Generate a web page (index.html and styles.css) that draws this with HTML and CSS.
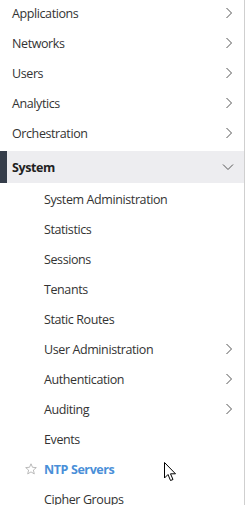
FILE: index.html
```html
<!DOCTYPE html>
<html>
<head>
<meta charset="utf-8">
<link rel="stylesheet" href="styles.css">
</head>
<body>
<nav class="nav">
  <div class="row top"><span class="label">Applications</span><svg class="chev" viewBox="0 0 8 12"><path d="M1.5 1 L6.5 6 L1.5 11"/></svg></div>
  <div class="row top"><span class="label">Networks</span><svg class="chev" viewBox="0 0 8 12"><path d="M1.5 1 L6.5 6 L1.5 11"/></svg></div>
  <div class="row top"><span class="label">Users</span><svg class="chev" viewBox="0 0 8 12"><path d="M1.5 1 L6.5 6 L1.5 11"/></svg></div>
  <div class="row top"><span class="label">Analytics</span><svg class="chev" viewBox="0 0 8 12"><path d="M1.5 1 L6.5 6 L1.5 11"/></svg></div>
  <div class="row top"><span class="label">Orchestration</span><svg class="chev" viewBox="0 0 8 12"><path d="M1.5 1 L6.5 6 L1.5 11"/></svg></div>
  <div class="row top active"><span class="label">System</span><svg class="chev down" viewBox="0 0 12 8"><path d="M1 1.5 L6 6.5 L11 1.5"/></svg></div>
  <div class="row sub"><span class="label">System Administration</span></div>
  <div class="row sub"><span class="label">Statistics</span></div>
  <div class="row sub"><span class="label">Sessions</span></div>
  <div class="row sub"><span class="label">Tenants</span></div>
  <div class="row sub"><span class="label">Static Routes</span></div>
  <div class="row sub"><span class="label">User Administration</span><svg class="chev" viewBox="0 0 8 12"><path d="M1.5 1 L6.5 6 L1.5 11"/></svg></div>
  <div class="row sub"><span class="label">Authentication</span><svg class="chev" viewBox="0 0 8 12"><path d="M1.5 1 L6.5 6 L1.5 11"/></svg></div>
  <div class="row sub"><span class="label">Auditing</span><svg class="chev" viewBox="0 0 8 12"><path d="M1.5 1 L6.5 6 L1.5 11"/></svg></div>
  <div class="row sub"><span class="label">Events</span></div>
  <div class="row sub current">
    <svg class="star" viewBox="0 0 12 12"><path d="M6 0.8 L7.5 4.3 L11.3 4.6 L8.4 7.1 L9.3 10.9 L6 8.9 L2.7 10.9 L3.6 7.1 L0.7 4.6 L4.5 4.3 Z"/></svg>
    <span class="label">NTP Servers</span>
    <svg class="cursor" viewBox="0 0 13 20"><path d="M0.5 0.5 L0.5 16 L4 12.5 L6.5 18.5 L9 17.5 L6.5 11.8 L11.5 11.8 Z"/></svg>
  </div>
  <div class="row sub"><span class="label">Cipher Groups</span></div>
</nav>
</body>
</html>
```

FILE: styles.css
```css
html, body {
  margin: 0;
  padding: 0;
  background: #fff;
}
body {
  font-family: "Open Sans", "Noto Sans", sans-serif;
  font-size: 12.5px;
  letter-spacing: -0.4px;
  color: #333;
}
.nav {
  width: 245px;
  height: 507px;
  box-sizing: border-box;
  border-right: 1px solid #cfcfcf;
  overflow: hidden;
  margin-top: -2px;
}
.row {
  position: relative;
  display: flex;
  align-items: center;
  height: 30px;
  padding-right: 11px;
}
.row.top { padding-left: 12px; }
.row.sub { padding-left: 44px; }
.label {
  flex: 1;
  white-space: nowrap;
}
.chev {
  width: 8px;
  height: 12px;
  fill: none;
  stroke: #555;
  stroke-width: 1;
}
.chev.down {
  width: 12px;
  height: 8px;
  margin-right: -1px;
}
.row.active {
  height: 32px;
  margin: 3px 0 1px;
  background: #ededf0;
  padding-left: 12px;
}
.row.active::before {
  content: "";
  position: absolute;
  left: 0;
  top: 0;
  bottom: 0;
  width: 7px;
  background: #353d4a;
}
.row.active .label {
  font-weight: 700;
  color: #222;
}
.row.current .label {
  font-weight: 700;
  color: #4a8fd8;
}
.star {
  position: absolute;
  left: 25px;
  top: 9px;
  width: 12px;
  height: 12px;
  fill: none;
  stroke: #aaa;
  stroke-width: 0.8;
}
.cursor {
  position: absolute;
  left: 164px;
  top: 8px;
  width: 13px;
  height: 20px;
  fill: #fff;
  stroke: #000;
  stroke-width: 1;
}
```
